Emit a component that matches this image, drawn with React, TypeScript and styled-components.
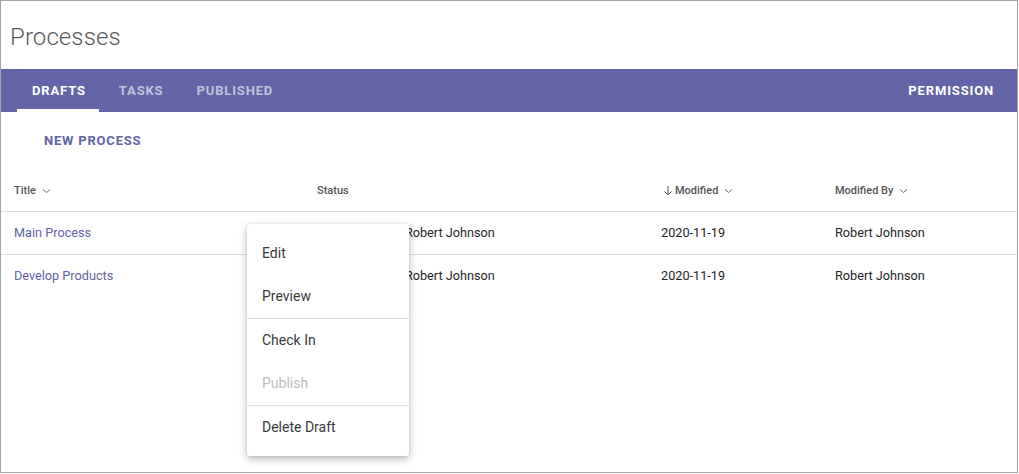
import React from "react";
import styled, { createGlobalStyle } from "styled-components";

const Global = createGlobalStyle`
  html, body { margin: 0; padding: 0; background: #fff; }
  body { font-family: Roboto, "Liberation Sans", sans-serif; }
`;

const Frame = styled.div`
  position: relative;
  width: 1016px;
  height: 471px;
  border: 1px solid #a3a3a3;
  background: #fff;
  overflow: hidden;
`;

const PageTitle = styled.h1`
  margin: 0;
  height: 68px;
  padding: 4px 0 0 9px;
  box-sizing: border-box;
  display: flex;
  align-items: center;
  font-family: Roboto, sans-serif;
  font-weight: 300;
  font-size: 24px;
  letter-spacing: 0.1px;
  color: #5a5a5a;
`;

const TabBar = styled.div`
  height: 43px;
  background: #6264a7;
  display: flex;
  align-items: stretch;
  gap: 4px;
  padding: 0 9px 0 16px;
`;

const Tab = styled.div<{ $active?: boolean; $bright?: boolean }>`
  position: relative;
  display: flex;
  align-items: center;
  padding: 0 14px 0 15px;
  font-size: 13px;
  font-weight: 700;
  letter-spacing: 0.85px;
  color: ${(p) => (p.$active || p.$bright ? "#fff" : "rgba(255,255,255,0.62)")};
  &::after {
    content: "";
    position: absolute;
    left: 0;
    right: 1px;
    bottom: 0;
    height: 3px;
    background: ${(p) => (p.$active ? "#fff" : "transparent")};
  }
`;

const Spacer = styled.div`
  flex: 1;
`;

const Toolbar = styled.div`
  height: 57px;
  display: flex;
  align-items: center;
  padding-left: 43px;
`;

const TextButton = styled.div`
  font-size: 13px;
  font-weight: 700;
  letter-spacing: 0.8px;
  color: #6264a7;
`;

const Grid = styled.div`
  display: grid;
  grid-template-columns: 303px 344px 174px 1fr;
`;

const HeadCell = styled.div<{ $indent?: boolean }>`
  height: 42px;
  display: flex;
  align-items: center;
  padding-left: ${(p) => (p.$indent ? 15 : 13)}px;
  font-size: 11px;
  font-weight: 500;
  color: #555;
  border-bottom: 1px solid #dcdcdc;
  gap: 2px;
`;

const Cell = styled.div<{ $link?: boolean; $last?: boolean }>`
  height: 41px;
  display: flex;
  align-items: center;
  padding-left: 13px;
  padding-bottom: 1px;
  font-size: 12.7px;
  color: ${(p) => (p.$link ? "#6264a7" : "#252525")};
  border-bottom: 1px solid ${(p) => (p.$last ? "transparent" : "#dcdcdc")};
  white-space: nowrap;
`;

const Menu = styled.div`
  position: absolute;
  left: 246px;
  top: 223px;
  width: 162px;
  padding: 7px 0 8px;
  background: #fff;
  border-radius: 3px;
  box-shadow: 0 3px 8px rgba(0, 0, 0, 0.28), 0 0 2px rgba(0, 0, 0, 0.12);
`;

const MenuItem = styled.div<{ $disabled?: boolean }>`
  height: 43px;
  display: flex;
  align-items: center;
  padding-left: 15px;
  font-size: 14px;
  color: ${(p) => (p.$disabled ? "#bdbdbd" : "#3a3a3a")};
`;

const Divider = styled.div`
  height: 1px;
  margin-top: 1px;
  margin-bottom: -1px;
  background: #dedede;
`;

const Chevron = () => (
  <svg width="9" height="6" viewBox="0 0 9 6" style={{ marginLeft: 4, marginTop: 2 }}>
    <path d="M1 1.5 L4.5 4.5 L8 1.5" fill="none" stroke="#666" strokeWidth="1" />
  </svg>
);

const DownArrow = () => (
  <svg width="10" height="11" viewBox="0 0 10 11">
    <path d="M5 1 V10 M1.5 6.5 L5 10 L8.5 6.5" fill="none" stroke="#555" strokeWidth="1" />
  </svg>
);

const rows = [{ title: "Main Process" }, { title: "Develop Products" }];

export default function App() {
  return (
    <>
      <Global />
      <Frame>
        <PageTitle>Processes</PageTitle>
        <TabBar>
          <Tab $active>DRAFTS</Tab>
          <Tab>TASKS</Tab>
          <Tab>PUBLISHED</Tab>
          <Spacer />
          <Tab $bright>PERMISSION</Tab>
        </TabBar>
        <Toolbar>
          <TextButton>NEW PROCESS</TextButton>
        </Toolbar>
        <Grid>
          <HeadCell>
            Title <Chevron />
          </HeadCell>
          <HeadCell>Status</HeadCell>
          <HeadCell $indent>
            <DownArrow />
            Modified <Chevron />
          </HeadCell>
          <HeadCell>
            Modified By <Chevron />
          </HeadCell>
          {rows.map((r, i) => {
            const last = i === rows.length - 1;
            return (
              <React.Fragment key={r.title}>
                <Cell $link $last={last}>{r.title}</Cell>
                <Cell $last={last}>Checked out to Robert Johnson</Cell>
                <Cell $last={last}>2020-11-19</Cell>
                <Cell $last={last}>Robert Johnson</Cell>
              </React.Fragment>
            );
          })}
        </Grid>
        <Menu>
          <MenuItem>Edit</MenuItem>
          <MenuItem>Preview</MenuItem>
          <Divider />
          <MenuItem>Check In</MenuItem>
          <MenuItem $disabled>Publish</MenuItem>
          <Divider />
          <MenuItem>Delete Draft</MenuItem>
        </Menu>
      </Frame>
    </>
  );
}
